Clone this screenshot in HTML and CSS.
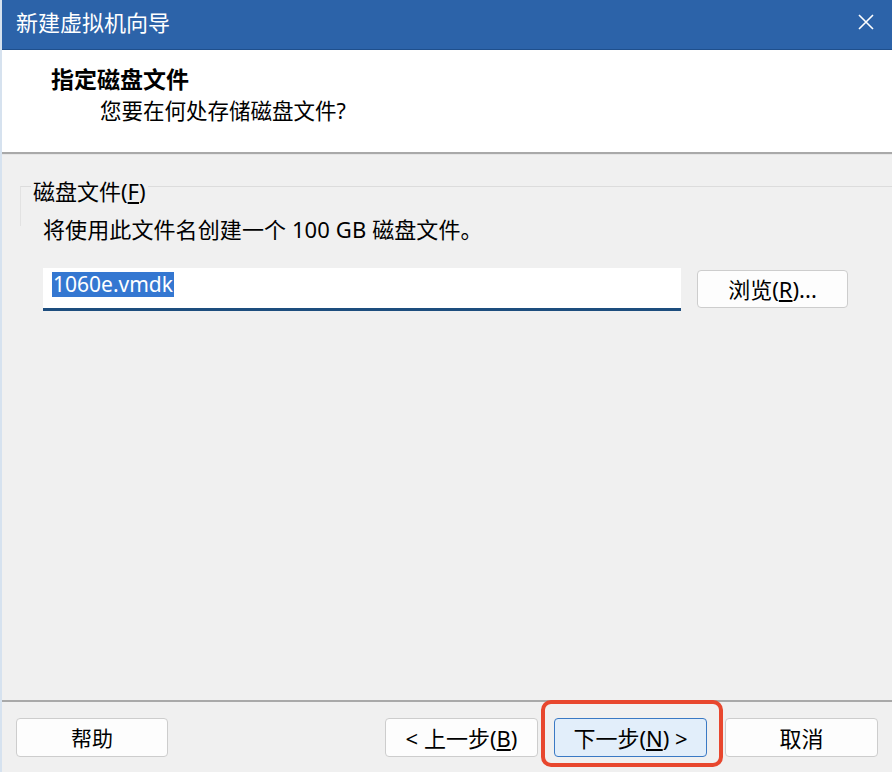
FILE: index.html
```html
<!DOCTYPE html>
<html lang="zh-CN">

<head>
    <meta charset="UTF-8">
    <meta name="viewport" content="width=device-width, initial-scale=1.0">
    <title>新建虚拟机向导</title>
    <link rel="stylesheet" href="styles.css">
</head>

<body>
    <div class="window">
        <div class="titlebar">
            <span class="title">新建虚拟机向导</span>
            <svg class="close" width="18" height="18" viewBox="0 0 18 18">
                <path d="M2 2 L16 16 M16 2 L2 16" stroke="#fff" stroke-width="1.6" fill="none" />
            </svg>
        </div>

        <div class="header">
            <div class="step-title">指定磁盘文件</div>
            <div class="step-desc">您要在何处存储磁盘文件?</div>
        </div>

        <div class="content">
            <fieldset class="group">
                <legend>磁盘文件(<u>F</u>)</legend>
                <div class="group-body">
                    <p class="note">将使用此文件名创建一个 100 GB 磁盘文件。</p>
                    <div class="file-row">
                        <div class="file-input"><span class="selected">1060e.vmdk</span></div>
                        <button class="btn btn-browse">浏览(<u>R</u>)...</button>
                    </div>
                </div>
            </fieldset>
        </div>

        <div class="footer">
            <button class="btn btn-help">帮助</button>
            <button class="btn btn-back">&lt; 上一步(<u>B</u>)</button>
            <button class="btn btn-next">下一步(<u>N</u>) &gt;</button>
            <button class="btn btn-cancel">取消</button>
        </div>

        <div class="highlight"></div>
    </div>
</body>

</html>
```

FILE: styles.css
```css
* {
    margin: 0;
    padding: 0;
    box-sizing: border-box;
}

body {
    font-family: "Noto Sans", "Noto Sans CJK SC", sans-serif;
    background: #f0f0f0;
    color: #000;
    overflow: hidden;
}

.window {
    position: relative;
    width: 892px;
    height: 772px;
    display: flex;
    flex-direction: column;
    background: #f0f0f0;
    border-left: 2px solid #d6e2ef;
}

/* title bar */
.titlebar {
    height: 50px;
    flex-shrink: 0;
    display: flex;
    align-items: center;
    justify-content: space-between;
    padding: 0 17px 5px 14px;
    background: #2c63a9;
    border-bottom: 1px solid #1f4f8c;
    color: #fff;
}

.title {
    font-size: 22px;
    line-height: 30px;
}

/* header */
.header {
    height: 104px;
    flex-shrink: 0;
    padding: 14px 0 0 49px;
    background: #fff;
    border-bottom: 2px solid #a9a9a9;
}

.step-title {
    font-size: 23px;
    font-weight: bold;
    line-height: 30px;
}

.step-desc {
    margin-top: 2px;
    padding-left: 49px;
    font-size: 21.5px;
    line-height: 30px;
}

/* content */
.content {
    flex: 1;
    padding: 11px 0 0 18px;
    border-top: 1px solid #e6e6e6;
}

.group {
    border: none;
    border-top: 1px solid #dcdcdc;
    border-left: 1px solid #e2e2e2;
    padding: 0 0 0 10px;
    height: 60px;
    overflow: visible;
}

.group legend {
    padding: 10px 2px 0;
    font-size: 22px;
    line-height: 30px;
}

.group-body {
    padding: 8px 0 0 12px;
}

.note {
    font-size: 22px;
    line-height: 30px;
    letter-spacing: 0.1px;
}

.file-row {
    display: flex;
    align-items: flex-start;
    gap: 16px;
    margin-top: 24px;
}

.file-input {
    width: 638px;
    height: 43px;
    padding: 4px 0 0 9px;
    background: #fff;
    border-bottom: 3px solid #1d4d7e;
}

.selected {
    display: inline-block;
    padding: 0 1px;
    background: #3477d1;
    color: #fff;
    font-size: 21px;
    line-height: 25px;
}

/* buttons */
.btn {
    height: 39px;
    width: 153px;
    background: #fdfdfd;
    border: 1px solid #cdcdcd;
    border-radius: 4px;
    font-family: inherit;
    font-size: 22px;
    line-height: 30px;
    color: #000;
}

.btn u {
    text-underline-offset: 2px;
}

.btn-browse {
    width: 151px;
    height: 38px;
    margin-top: 2px;
}

.footer {
    height: 72px;
    flex-shrink: 0;
    display: flex;
    align-items: flex-start;
    padding: 16px 14px 0 14px;
    border-top: 2px solid #a9a9a9;
}

.btn-help {
    width: 152px;
    font-size: 21px;
}

.btn-back {
    margin-left: auto;
}

.btn-next {
    margin-left: 16px;
    background: #e2eefa;
    border: 1.5px solid #3a79c4;
}

.btn-cancel {
    margin-left: 18px;
}

/* red annotation box */
.highlight {
    position: absolute;
    left: 539px;
    top: 700px;
    width: 182px;
    height: 67px;
    border: 4px solid #e8472e;
    border-radius: 10px;
}
```
